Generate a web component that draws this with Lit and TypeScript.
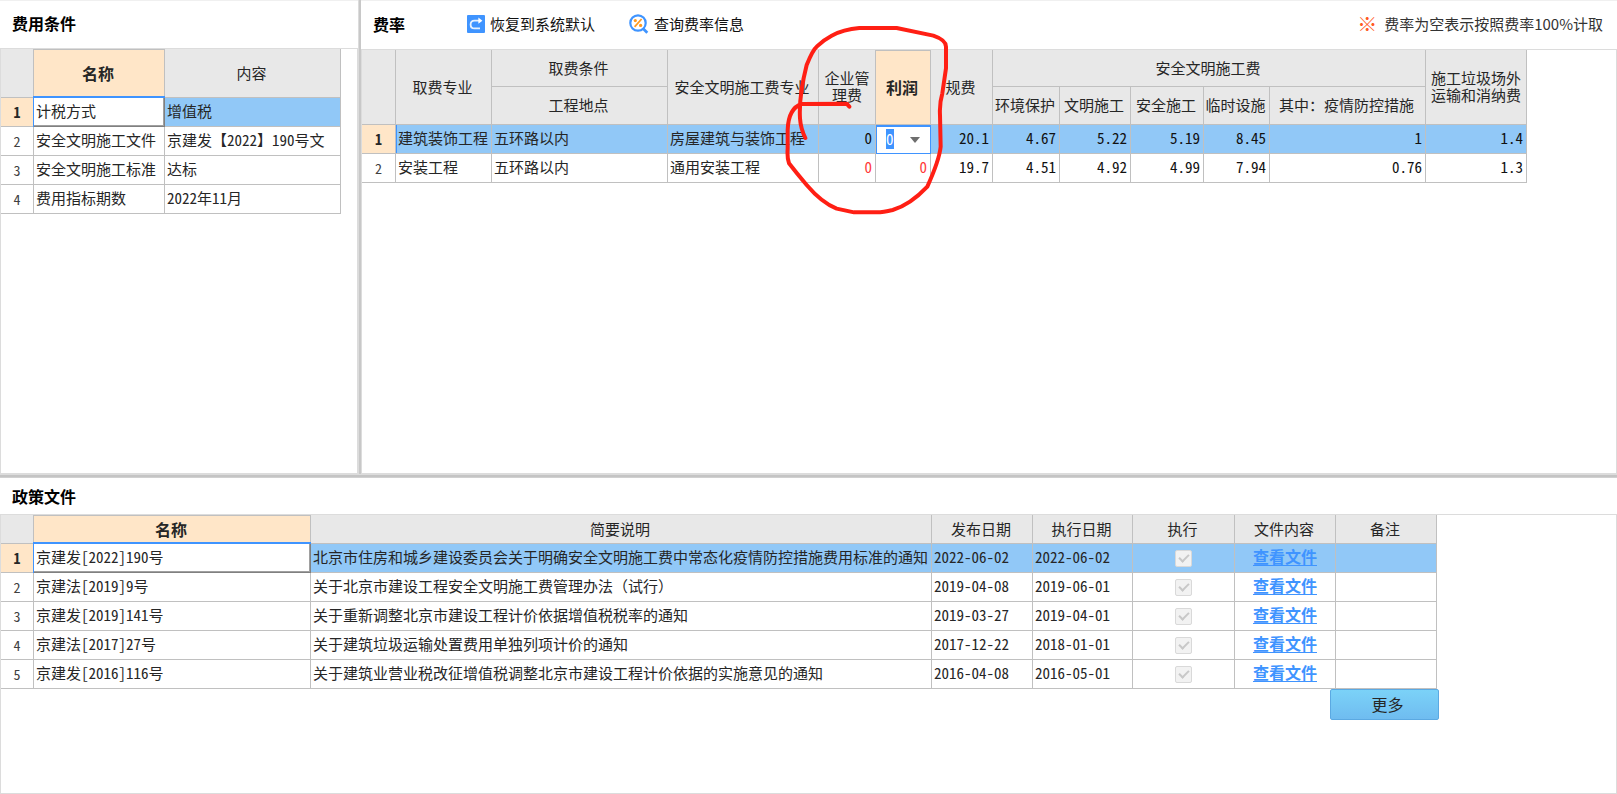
import { LitElement, html, css, svg } from "lit";
import { customElement } from "lit/decorators.js";
import { classMap } from "lit/directives/class-map.js";

const tableStyles = css`
  table {
    table-layout: fixed;
    border-collapse: separate;
    border-spacing: 0;
    width: 0;
    font-size: 15px;
    line-height: 17px;
    color: #262626;
  }
  th,
  td {
    box-sizing: border-box;
    border-right: 1px solid #c0c0c0;
    border-bottom: 1px solid #c0c0c0;
    padding: 0 0 3px 2px;
    height: 29px;
    font-weight: 400;
    text-align: left;
    white-space: nowrap;
  }
  thead th {
    background: #e8e8e8;
    text-align: center;
    padding: 0 2px 2px 0;
  }
  thead th.active {
    background: #ffe6c8;
    font-size: 16px;
    font-weight: 700;
    box-shadow: inset 0 1px #c0c0c0;
    padding-bottom: 0;
  }
  tbody th {
    text-align: center;
    padding: 1px 0 0;
    font-size: 14px;
    color: #404040;
  }
  tr.selected td {
    background: #91c8f7;
  }
  tr.selected th {
    background: #ffe6c8;
    font-weight: 700;
    color: #262626;
  }
  td.num {
    text-align: right;
    padding-right: 3px;
    color: #111;
  }
  td.red {
    color: #ff3b3b;
  }
  td.center {
    text-align: center;
    padding-left: 0;
  }
  tr td.current {
    position: relative;
    background: #fff;
    border-color: #808080;
    box-shadow: inset -1px -1px #a0a0a0, -1px 0 #3f94ff, 0 -2px #3f94ff, -1px -2px #3f94ff;
  }
`;

@customElement("condition-table")
export class ConditionTable extends LitElement {
  static styles = [
    tableStyles,
    css`
      :host { display: block; }
      .c-no { width: 33px; }
      .c-name { width: 131px; }
      .c-value { width: 176px; }
      thead th { height: 49px; }
    `,
  ];
  private rows = [
    ["计税方式", "增值税"],
    ["安全文明施工文件", "京建发【2022】190号文"],
    ["安全文明施工标准", "达标"],
    ["费用指标期数", "2022年11月"],
  ];
  render() {
    return html`<table aria-label="费用条件">
      <colgroup><col class="c-no" /><col class="c-name" /><col class="c-value" /></colgroup>
      <thead><tr><th></th><th class="active">名称</th><th>内容</th></tr></thead>
      <tbody>
        ${this.rows.map(
          (r, i) => html`<tr class=${classMap({ selected: i === 0 })}>
            <th scope="row">${i + 1}</th>
            <td class=${classMap({ current: i === 0 })}>${r[0]}</td>
            <td>${r[1]}</td>
          </tr>`
        )}
      </tbody>
    </table>`;
  }
}

@customElement("rate-table")
export class RateTable extends LitElement {
  static styles = [
    tableStyles,
    css`
      :host { display: block; }
      .top th { height: 37px; }
      .sub th { height: 38px; }
      thead th.wrap { white-space: normal; padding: 0 4px 2px; }
      tr td.first { box-shadow: inset 1px 0 #3f94ff; }
      tr td.edit {
        background: #fff;
        border-color: #3f94ff;
        box-shadow: inset 1px 2px #3f94ff;
        padding: 0;
      }
      .combo { display: flex; align-items: center; padding: 0 8px 0 10px; gap: 4px; }
      .combo input {
        box-sizing: border-box;
        flex: 1;
        min-width: 0;
        height: 20px;
        border: 0;
        padding: 0 0 2px;
        margin: 0;
        outline: 0;
        background: transparent;
        font: inherit;
        line-height: 18px;
        color: #262626;
      }
      .combo input::selection { background: #3f94ff; color: #fff; }
      .combo button { display: flex; border: 0; padding: 2px; background: none; }
      .combo svg { width: 10px; height: 7px; }
    `,
  ];
  private widths = [34, 96, 176, 151, 57, 55, 62, 67, 71, 73, 66, 156, 101];
  private rows = [
    ["建筑装饰工程", "五环路以内", "房屋建筑与装饰工程", "0", "0", "20.1", "4.67", "5.22", "5.19", "8.45", "1", "1.4"],
    ["安装工程", "五环路以内", "通用安装工程", "0", "0", "19.7", "4.51", "4.92", "4.99", "7.94", "0.76", "1.3"],
  ];
  firstUpdated() {
    const input = this.renderRoot.querySelector("input");
    input?.focus();
    input?.select();
  }
  private cell(value: string, row: number, col: number) {
    if (row === 0 && col === 4) {
      return html`<td class="edit">
        <div class="combo">
          <input type="text" aria-label="利润" .value=${value} />
          <button aria-label="展开">
            <svg viewBox="0 0 10 7"><path d="M0 1h10L5 7z" fill="#6e6e6e" /></svg>
          </button>
        </div>
      </td>`;
    }
    const cls = { first: row === 0 && col === 0, num: col > 2, red: row === 1 && (col === 3 || col === 4) };
    return html`<td class=${classMap(cls)}>${value}</td>`;
  }
  render() {
    return html`<table aria-label="费率">
      <colgroup>${this.widths.map((w) => html`<col style="width:${w}px" />`)}</colgroup>
      <thead>
        <tr class="top">
          <th rowspan="2"></th>
          <th rowspan="2">取费专业</th>
          <th>取费条件</th>
          <th rowspan="2">安全文明施工费专业</th>
          <th rowspan="2" class="wrap">企业管理费</th>
          <th rowspan="2" class="active">利润</th>
          <th rowspan="2">规费</th>
          <th colspan="5">安全文明施工费</th>
          <th rowspan="2" class="wrap">施工垃圾场外运输和消纳费</th>
        </tr>
        <tr class="sub">
          <th>工程地点</th>
          <th>环境保护</th>
          <th>文明施工</th>
          <th>安全施工</th>
          <th>临时设施</th>
          <th>其中：疫情防控措施</th>
        </tr>
      </thead>
      <tbody>
        ${this.rows.map(
          (r, i) => html`<tr class=${classMap({ selected: i === 0 })}>
            <th scope="row">${i + 1}</th>
            ${r.map((v, c) => this.cell(v, i, c))}
          </tr>`
        )}
      </tbody>
    </table>`;
  }
}

@customElement("policy-table")
export class PolicyTable extends LitElement {
  static styles = [
    tableStyles,
    css`
      :host { display: flex; flex-direction: column; width: fit-content; }
      .summary { font-feature-settings: normal; }
      input {
        appearance: none;
        display: inline-grid;
        place-items: center;
        box-sizing: border-box;
        width: 17px;
        height: 17px;
        margin: 3px 0 0;
        border: 1px solid #d9d9d9;
        border-radius: 2px;
        background: #f2f2f2;
        vertical-align: middle;
      }
      input::before {
        content: "";
        width: 8px;
        height: 4px;
        margin-bottom: 3px;
        border: solid #c8c8c8;
        border-width: 0 0 2px 2px;
        rotate: -45deg;
      }
      a {
        color: #3f94ff;
        font-size: 16px;
        font-weight: 700;
        text-decoration: underline;
        text-underline-offset: 2px;
      }
      .more {
        align-self: flex-end;
        box-sizing: border-box;
        width: 109px;
        height: 31px;
        margin-right: -2px;
        padding: 0 0 2px 6px;
        border: 1px solid #5ba9e2;
        border-radius: 2px;
        background: linear-gradient(#7bd2f8, #6fbcf0);
        font: inherit;
        font-size: 16px;
        line-height: 20px;
        color: #262626;
      }
    `,
  ];
  private widths = [33, 277, 621, 101, 100, 102, 101, 101];
  private rows = [
    ["京建发[2022]190号", "北京市住房和城乡建设委员会关于明确安全文明施工费中常态化疫情防控措施费用标准的通知", "2022-06-02", "2022-06-02"],
    ["京建法[2019]9号", "关于北京市建设工程安全文明施工费管理办法（试行）", "2019-04-08", "2019-06-01"],
    ["京建发[2019]141号", "关于重新调整北京市建设工程计价依据增值税税率的通知", "2019-03-27", "2019-04-01"],
    ["京建法[2017]27号", "关于建筑垃圾运输处置费用单独列项计价的通知", "2017-12-22", "2018-01-01"],
    ["京建发[2016]116号", "关于建筑业营业税改征增值税调整北京市建设工程计价依据的实施意见的通知", "2016-04-08", "2016-05-01"],
  ];
  render() {
    return html`<table aria-label="政策文件">
        <colgroup>${this.widths.map((w) => html`<col style="width:${w}px" />`)}</colgroup>
        <thead>
          <tr>
            <th></th><th class="active">名称</th><th>简要说明</th><th>发布日期</th><th>执行日期</th>
            <th>执行</th><th>文件内容</th><th>备注</th>
          </tr>
        </thead>
        <tbody>
          ${this.rows.map(
            (r, i) => html`<tr class=${classMap({ selected: i === 0 })}>
              <th scope="row">${i + 1}</th>
              ${r.map((v, c) => html`<td class=${classMap({ current: i === 0 && c === 0, summary: c === 1 })}>${v}</td>`)}
              <td class="center"><input type="checkbox" checked disabled aria-label="执行" /></td>
              <td class="center"><a href="#">查看文件</a></td>
              <td></td>
            </tr>`
          )}
        </tbody>
      </table>
      <button class="more">更多</button>`;
  }
}

const restoreIcon = svg`<svg viewBox="0 0 18 18" width="18" height="18" aria-hidden="true">
  <rect width="18" height="18" rx="1" fill="#3f94ff" />
  <path d="M13 13.4H7.4C5 13.4 3.6 11.6 3.6 9.4S5 5.6 7.4 5.6h5" fill="none" stroke="#e6f1ff" stroke-width="1.8" />
  <path d="M11.4 2.4l4 3.3-4 3.1z" fill="#fff" />
</svg>`;

const queryIcon = svg`<svg viewBox="0 0 20 20" width="20" height="20" aria-hidden="true">
  <circle cx="9" cy="9" r="7.7" fill="#fff" stroke="#3f94ff" stroke-width="2.2" />
  <path d="M14 14.5l4.3 4.2" stroke="#3f94ff" stroke-width="2.8" />
  <path d="M12.6 5l-7 7.8" stroke="#ff9a1f" stroke-width="1.8" />
  <circle cx="6.3" cy="6.6" r="1.6" fill="#ff9a1f" />
  <circle cx="11.6" cy="11.4" r="1.6" fill="#ff9a1f" />
</svg>`;

@customElement("app-root")
export class AppRoot extends LitElement {
  static styles = css`
    :host {
      box-sizing: border-box;
      display: grid;
      grid-template-rows: minmax(0, 3fr) 4px minmax(0, 2fr);
      height: 100vh;
      overflow: hidden;
      background: #fff;
      font-family: "Noto Sans CJK SC", "Noto Sans", sans-serif;
      font-feature-settings: "hwid";
      color: #000;
    }
    .upper {
      display: grid;
      grid-template-columns: 358px 3px minmax(0, 1fr);
      box-shadow: inset 0 1px #f0f0f0;
    }
    .split-v { background: #c8c8c8; box-shadow: inset 1px 0 #dcdcdc; }
    .split-h { background: #c4c4c4; box-shadow: inset 0 1px #dcdcdc, inset 0 -1px #d0d0d0; }
    .panel { display: flex; flex-direction: column; min-width: 0; position: relative; }
    .bar {
      display: flex;
      align-items: center;
      box-sizing: border-box;
      height: 48px;
      padding: 0 14px 2px 12px;
      font-size: 15px;
      line-height: 20px;
    }
    .rates .bar { height: 49px; }
    .policy .bar { height: 36px; padding-bottom: 0; }
    h2 { margin: 0; font-size: 16px; line-height: 20px; font-weight: 700; }
    .pane { flex: 1; min-height: 0; border: 1px solid #dcdcdc; overflow: hidden; }
    .tool {
      display: flex;
      align-items: center;
      gap: 5px;
      border: 0;
      padding: 0;
      background: none;
      font: inherit;
      color: #111;
    }
    .tools { display: flex; gap: 34px; margin-left: 62px; }
    .note {
      display: flex;
      align-items: center;
      gap: 7px;
      margin: 0 0 0 auto;
      color: #333;
      font-feature-settings: normal;
    }
    .mark { color: #ff5a1f; font-size: 20px; }
    .scribble {
      position: absolute;
      left: 424px;
      top: 25px;
      width: 164px;
      height: 190px;
      pointer-events: none;
    }
  `;
  render() {
    return html`
      <div class="upper">
        <section class="panel">
          <header class="bar"><h2>费用条件</h2></header>
          <div class="pane"><condition-table></condition-table></div>
        </section>
        <div class="split-v"></div>
        <section class="panel rates">
          <header class="bar">
            <h2>费率</h2>
            <div class="tools">
              <button class="tool">${restoreIcon}恢复到系统默认</button>
              <button class="tool">${queryIcon}查询费率信息</button>
            </div>
            <p class="note"><span class="mark">※</span>费率为空表示按照费率100%计取</p>
          </header>
          <div class="pane"><rate-table></rate-table></div>
          <svg class="scribble" viewBox="105 75 492 570" aria-hidden="true">
            <path
              d="M166 414Q152 385 150 355Q146 290 170 195Q188 150 200 140Q220 120 245 107Q280 88 328 84H440L550 107Q588 120 588 140V205L577 280Q568 310 570 345L572 440Q568 480 532 560Q480 615 428 630Q400 637 380 637H312L260 626Q215 608 170 555Q140 520 117 490Q111 475 113 445V390Q115 325 155 312L290 311L298 320"
              fill="none" stroke="#ff1f14" stroke-width="12" stroke-linecap="round" stroke-linejoin="round"
            />
          </svg>
        </section>
      </div>
      <div class="split-h"></div>
      <section class="panel policy">
        <header class="bar"><h2>政策文件</h2></header>
        <div class="pane"><policy-table></policy-table></div>
      </section>
    `;
  }
}
